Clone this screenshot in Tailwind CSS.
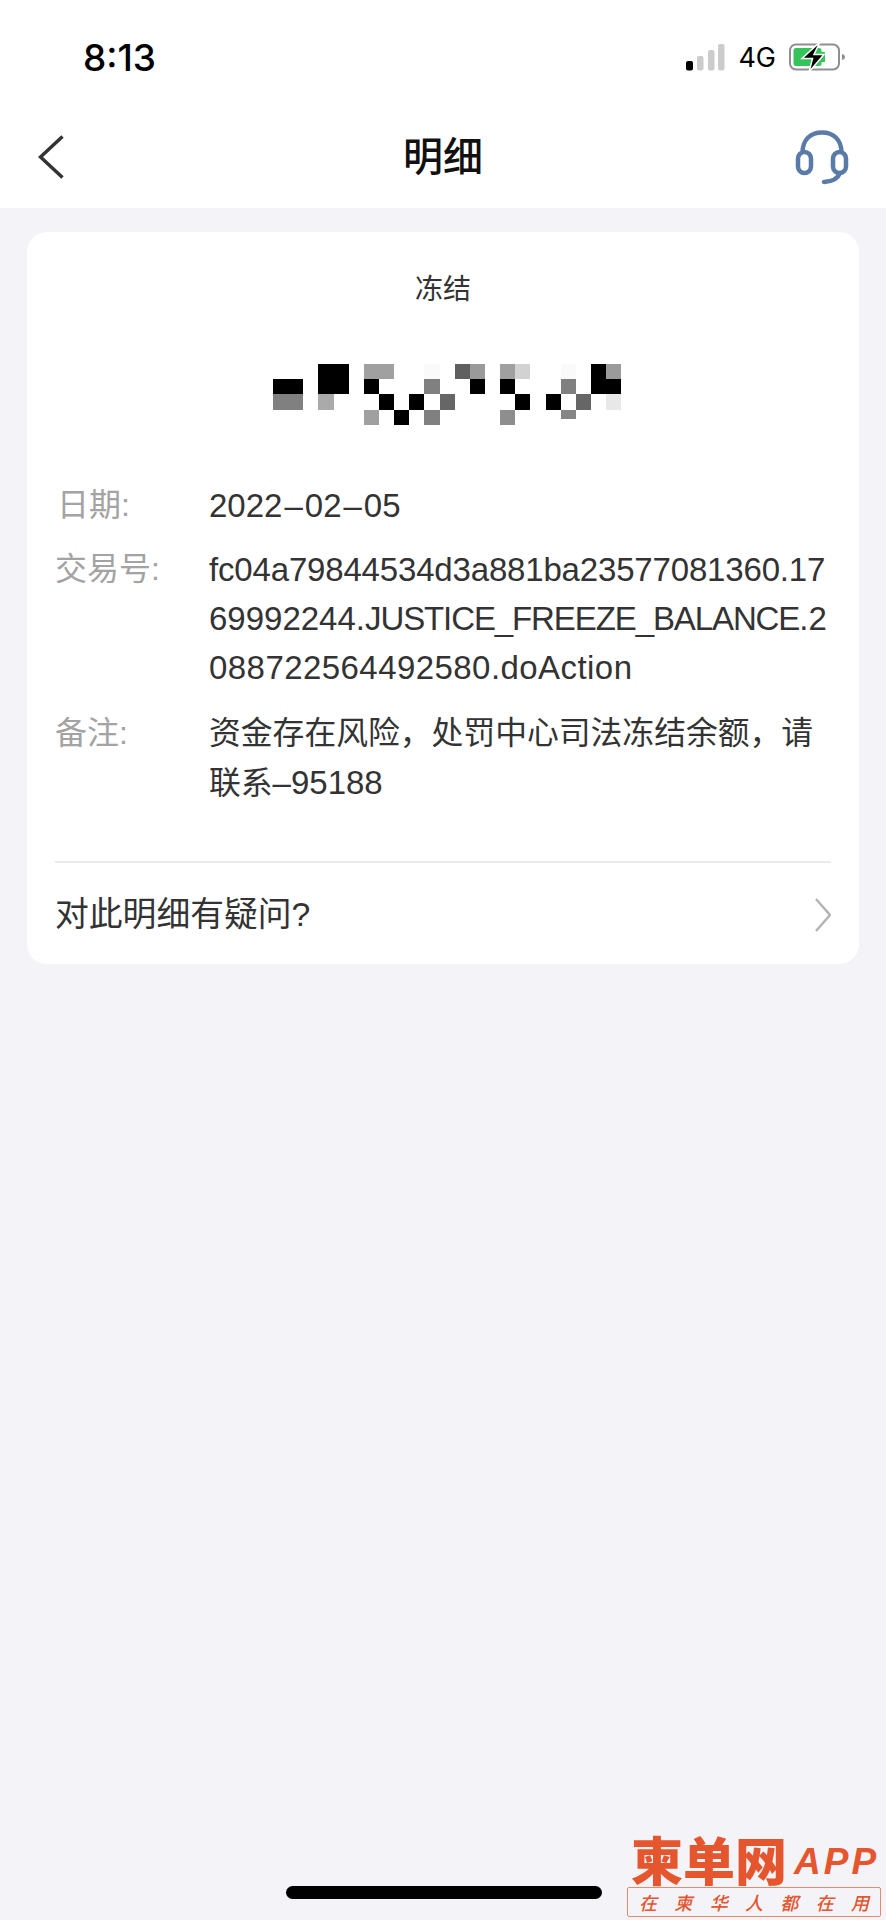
<!DOCTYPE html>
<html lang="zh-CN">
<head>
<meta charset="utf-8">
<script src="https://cdn.jsdelivr.net/npm/@tailwindcss/browser@4"></script>
</head>
<body class="m-0">
<div class="relative w-[886px] h-[1920px] overflow-hidden bg-[#f3f3f8] font-['Liberation_Sans','Noto_Sans_CJK_SC',sans-serif] text-[#333333]">
  <header class="bg-white h-[208px] flex flex-col">
    <div class="h-[100px] flex items-center justify-between pl-[83px] pr-[39px] pt-[14px]">
      <span class="font-['Inter',sans-serif] text-[37px] font-medium text-black leading-none">8:13</span>
      <div class="flex items-center gap-[13px]">
        <svg width="39" height="27" viewBox="0 0 39 27"><rect x="0" y="17" width="7" height="9.500" rx="2" fill="#000"/><rect x="11" y="12" width="6.500" height="14.500" rx="2" fill="#ccc"/><rect x="22" y="6" width="6.500" height="20.500" rx="2" fill="#ccc"/><rect x="32" y="0" width="6.500" height="26.500" rx="2" fill="#ccc"/></svg>
        <span class="font-['Inter',sans-serif] text-[27px] text-black leading-none">4G</span>
        <svg width="58" height="28" viewBox="0 0 58 28"><rect x="1" y="1.500" width="49" height="25" rx="6" fill="none" stroke="#8f8f8f" stroke-width="2"/><rect x="4.500" y="5" width="28" height="18" rx="2.500" fill="#35c45a"/><rect x="32" y="9" width="4" height="10" fill="#35c45a"/><path d="M53 11v6c2-.5 3-1.500 3-3s-1-2.500-3-3z" fill="#8f8f8f"/><path d="M31 -1L13 15.500h10.500L20 29L35 11.500H25L31 -1z" fill="#000" stroke="#fff" stroke-width="1.500"/></svg>
      </div>
    </div>
    <div class="relative flex-1 flex items-center justify-between pl-[38px] pr-[35px] pt-[6px]">
      <svg width="26" height="44" viewBox="0 0 26 44" fill="none" stroke="#333" stroke-width="3.500"><path d="M24.500 1.500L2.500 22L24.500 42.500"/></svg>
      <span class="absolute left-0 right-0 text-center text-[40px] leading-none font-medium text-[#111]">明细</span>
      <svg width="58" height="58" viewBox="0 0 58 58" fill="none" stroke="#5a7aa8" stroke-width="4.500"><path d="M9.500 25C9.500 11 18 4.500 29 4.500s19.500 6.500 19.500 20.500"/><rect x="5" y="24" width="13" height="21" rx="6.500"/><rect x="40" y="24" width="13" height="21" rx="6.500"/><path d="M47 45c-2 5.500-7 8.500-16 9" stroke-linecap="round"/></svg>
    </div>
  </header>

  <main class="mx-[27px] mt-[24px] w-[832px] h-[732px] bg-white rounded-[20px] px-[28px] flex flex-col">
    <p class="text-center text-[28px] leading-[40px] mt-[38px] text-[#333]">冻结</p>
    <div class="mt-[54px] ml-[218px] grid grid-cols-[repeat(23,15.150px)] grid-rows-[repeat(4,15.200px)] w-[349px] h-[61px]">
      <i class="col-start-4 col-span-2 row-start-1 bg-black"></i>
      <i class="col-start-7 col-span-2 row-start-1 bg-[#a0a0a0]"></i>
      <i class="col-start-11 row-start-1 bg-[#fafafa]"></i>
      <i class="col-start-13 row-start-1 bg-[#5f5f5f]"></i>
      <i class="col-start-14 row-start-1 bg-[#9a9a9a]"></i>
      <i class="col-start-16 row-start-1 bg-[#a0a0a0]"></i>
      <i class="col-start-17 row-start-1 bg-[#d2d2d2]"></i>
      <i class="col-start-20 row-start-1 bg-[#fafafa]"></i>
      <i class="col-start-22 row-start-1 bg-black"></i>
      <i class="col-start-23 row-start-1 bg-[#9a9a9a]"></i>

      <i class="col-start-1 col-span-2 row-start-2 bg-black"></i>
      <i class="col-start-4 col-span-2 row-start-2 bg-black"></i>
      <i class="col-start-7 row-start-2 bg-black"></i>
      <i class="col-start-11 row-start-2 bg-[#808080]"></i>
      <i class="col-start-14 row-start-2 bg-black"></i>
      <i class="col-start-16 row-start-2 bg-black"></i>
      <i class="col-start-20 row-start-2 bg-[#808080]"></i>
      <i class="col-start-22 col-span-2 row-start-2 bg-black"></i>

      <i class="col-start-1 col-span-2 row-start-3 bg-[#808080]"></i>
      <i class="col-start-4 row-start-3 bg-[#aaaaaa]"></i>
      <i class="col-start-8 row-start-3 bg-black"></i>
      <i class="col-start-10 row-start-3 bg-black"></i>
      <i class="col-start-12 row-start-3 bg-[#666666]"></i>
      <i class="col-start-17 row-start-3 bg-black"></i>
      <i class="col-start-19 row-start-3 bg-black"></i>
      <i class="col-start-21 row-start-3 bg-[#666666]"></i>
      <i class="col-start-23 row-start-3 bg-[#e8e8e8]"></i>

      <i class="col-start-7 row-start-4 bg-[#a0a0a0]"></i>
      <i class="col-start-9 row-start-4 bg-black"></i>
      <i class="col-start-11 row-start-4 bg-[#808080]"></i>
      <i class="col-start-16 row-start-4 bg-[#8e8e8e]"></i>
      <i class="col-start-20 row-start-4 h-[9px] bg-[#858585]"></i>
    </div>

    <dl class="mt-[56px] grid grid-cols-[154px_1fr] gap-y-[15px] text-[33px] leading-[49px]">
      <dt class="text-[#a3a3a3] text-[32px] pl-[2px]">日期:</dt>
      <dd class="whitespace-nowrap">2022<span class="mx-[2px]">–</span>02<span class="mx-[2px]">–</span>05</dd>
      <dt class="text-[#a3a3a3] text-[32px]">交易号:</dt>
      <dd class="whitespace-nowrap"><span class="tracking-[-0.17px]">fc04a79844534d3a881ba23577081360.17</span><br>69992244.<span class="tracking-[-1.100px]">JUSTICE_FREEZE_BALANCE</span>.2<br><span class="tracking-[0.440px]">088722564492580.doAction</span></dd>
      <dt class="text-[#a3a3a3] text-[32px] mt-[2px]">备注:</dt>
      <dd class="whitespace-nowrap mt-[2px] text-[31.800px]">资金存在风险，处罚中心司法冻结余额，请<br>联系<span class="text-[33px]">–95188</span></dd>
    </dl>

    <div class="mt-[53px] border-t-2 border-[#ebebeb] flex-1 flex items-center justify-between pt-[2px]">
      <span class="text-[33.800px] leading-none">对此明细有疑问?</span>
      <svg width="16" height="34" viewBox="0 0 16 34" fill="none" stroke="#b4b4b8" stroke-width="2.500"><path d="M1 1L15 17L1 33"/></svg>
    </div>
  </main>

  <div class="absolute left-[286px] top-[1886px] w-[316px] h-[13px] rounded-full bg-black"></div>

  <div class="absolute left-[627px] top-[1830px] w-[254px] flex flex-col text-[#e5552e]">
    <div class="flex items-center gap-[7px] pl-[4px] h-[57px]">
      <span class="text-[52px] leading-none font-black font-['Noto_Sans_CJK_SC',sans-serif] whitespace-nowrap">柬单网</span>
      <span class="text-[37px] leading-none font-bold italic tracking-[3px] pt-[6px]">APP</span>
    </div>
    <div class="h-[30px] border border-[#e88a70] rounded-[2px] flex items-center justify-between px-[11px] text-[18px] font-medium italic font-['Noto_Sans_CJK_SC',sans-serif] leading-none">
      <span>在</span><span>柬</span><span>华</span><span>人</span><span>都</span><span>在</span><span>用</span>
    </div>
  </div>
</div>
</body>
</html>
